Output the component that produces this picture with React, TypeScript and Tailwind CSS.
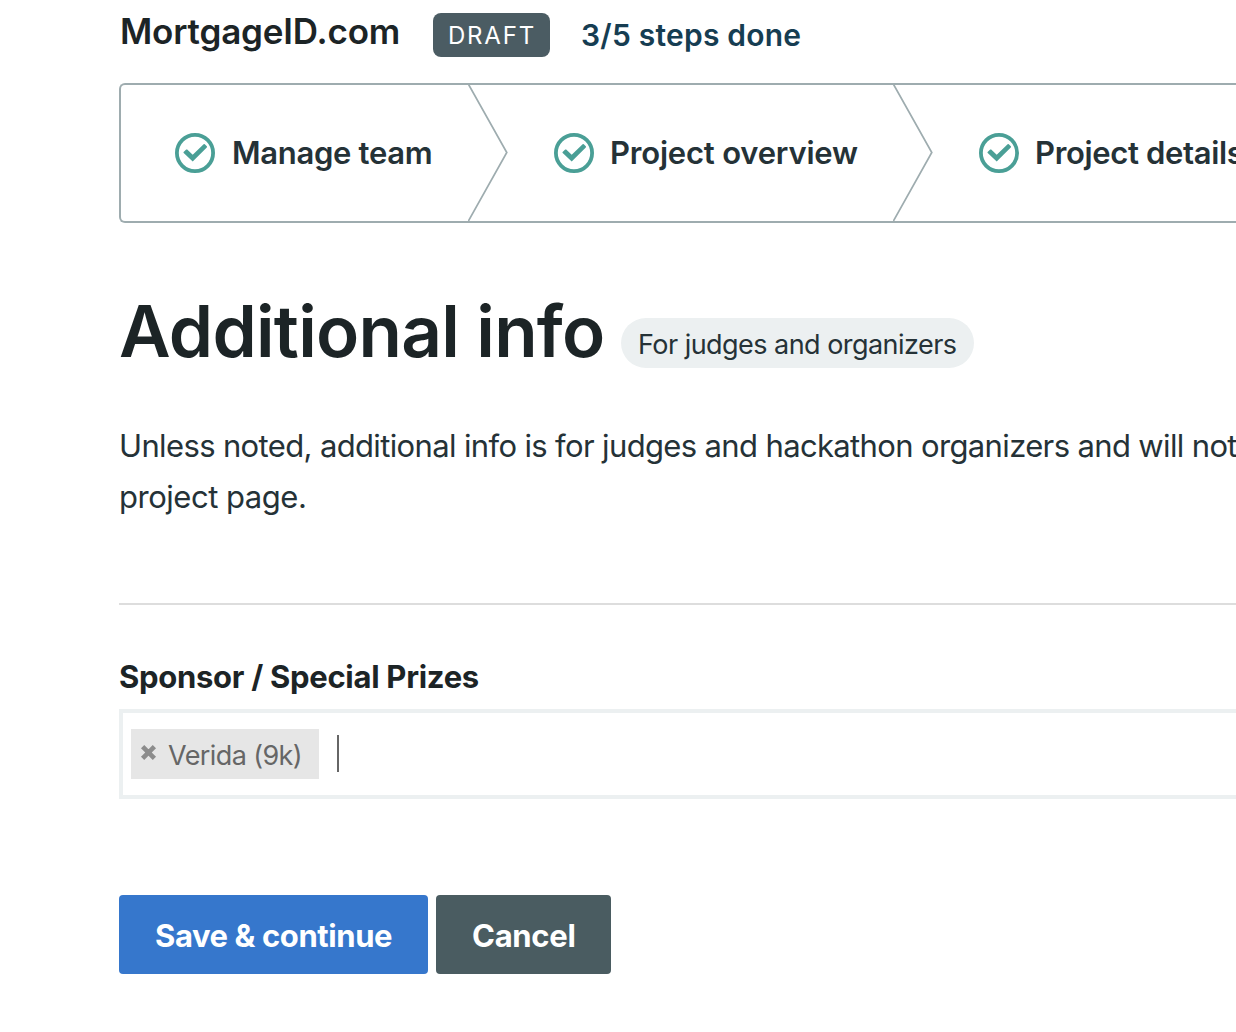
import type { ReactNode } from "react";

function CheckCircle() {
  return (
    <svg viewBox="0 0 40 40" className="size-10 shrink-0" fill="none" stroke="#4a9f96">
      <circle cx="20" cy="20" r="18.1" strokeWidth="3.8" />
      <path
        d="M8.6 19 L11.2 16.6 Q11.7 16.2 12.2 16.6 L17.7 21.8 L28.6 11.2 Q29.2 10.7 29.8 11.2 L31.8 13.2 Q32.3 13.8 31.8 14.4 L17.7 28.4 L8.7 20.1 Q8.2 19.5 8.6 19 Z"
        fill="#4a9f96"
        stroke="none"
      />
    </svg>
  );
}

function Chevron() {
  return (
    <svg viewBox="0 0 40 136" className="h-[136px] w-10 shrink-0" fill="none" stroke="#9eacaf" strokeWidth="1.7">
      <path d="M0.6 -0.5 L38.8 67.5 L0.4 136" />
    </svg>
  );
}

function Step({ className, label, chevron = true }: { className: string; label: ReactNode; chevron?: boolean }) {
  return (
    <li className={`flex h-full shrink-0 items-center ${className}`}>
      <CheckCircle />
      <span className="ml-4 flex-1 text-[31px] leading-10 font-semibold text-[#253237]">{label}</span>
      {chevron && <Chevron />}
    </li>
  );
}

export default function App() {
  return (
    <div className="h-[1032px] w-full overflow-hidden bg-white pl-[119px] font-['Inter',sans-serif] whitespace-nowrap text-[#253237]">
      <header className="flex h-[83px] items-start">
        <h2 className="mt-[11px] w-[314px] pl-px text-[35px] leading-10 font-semibold tracking-[-0.17px] text-[#1c2426]">
          MortgageID.com
        </h2>
        <span className="mt-[13px] flex h-11 w-[117px] items-center rounded-lg bg-[#4b5c63] pt-px pl-[15px] text-2xl leading-none tracking-[1.8px] text-white">
          DRAFT
        </span>
        <span className="mt-[15px] ml-[31px] text-[30px] leading-10 font-semibold tracking-[0.22px] text-[#163d52]">
          3/5 steps done
        </span>
      </header>

      <ol className="flex h-[140px] items-center rounded-l-md border-2 border-r-0 border-[#9eacaf]">
        <Step className="w-[387px] pl-[54px]" label={<span className="pl-px tracking-[-0.3px]">Manage team</span>} />
        <Step className="w-[425px] pl-[46px]" label={<span className="tracking-[-0.2px]">Project overview</span>} />
        <Step
          className="pl-[46px]"
          chevron={false}
          label={<span className="tracking-[-0.341px]">Project details</span>}
        />
      </ol>

      <div className="mt-[68px] flex h-20 items-start">
        <h1 className="w-[502px] text-[71px] leading-20 font-semibold tracking-[-0.732px] text-[#1c2426]">
          Additional info
        </h1>
        <span className="mt-[27px] flex h-[50px] w-[353px] items-center rounded-full bg-[#ecf0f1] pt-[3px] pl-[17px] text-[27px] leading-none tracking-[-0.54px]">
          For judges and organizers
        </span>
      </div>

      <p className="mt-[49px] text-[31px] leading-[51px] tracking-[-0.64px]">
        Unless noted, additional info is for judges and hackathon organizers and will not
        <br />
        <span className="tracking-[-0.48px]">project page.</span>
      </p>

      <hr className="mt-[81px] border-t-2 border-[#dddddd]" />

      <label className="mt-[52px] block text-[31px] leading-10 font-bold tracking-[-0.29px] text-[#1c2426]">
        Sponsor / Special Prizes
      </label>
      <div className="mt-3 flex h-[90px] items-start border-4 border-r-0 border-[#ecf0f1] pt-4 pl-2">
        <span className="flex h-[50px] w-[188px] items-center bg-[#e6e6e6] pl-[9px] text-[27px] leading-none tracking-[-0.6px] text-[#666666]">
          <svg viewBox="0 0 17 17" className="mb-[3px] size-[17px]" fill="none" stroke="#8c8c8c" strokeWidth="4.6">
            <path d="M2.6 2.6 L14.4 14.4 M14.4 2.6 L2.6 14.4" />
          </svg>
          <span className="ml-[11px] pt-0.5">Verida (9k)</span>
        </span>
        <span className="mt-1.5 ml-[18px] h-[37px] w-0.5 bg-[#666666]" />
      </div>

      <div className="mt-24 flex gap-2">
        <button className="h-[79px] w-[309px] rounded bg-[#3677cc] pt-1 pl-9 text-left text-[31px] font-bold tracking-[-0.4px] text-white">
          Save &amp; continue
        </button>
        <button className="h-[79px] w-[175px] rounded bg-[#4a5c61] pt-1 pl-9 text-left text-[31px] font-bold tracking-[-0.3px] text-white">
          Cancel
        </button>
      </div>
    </div>
  );
}
